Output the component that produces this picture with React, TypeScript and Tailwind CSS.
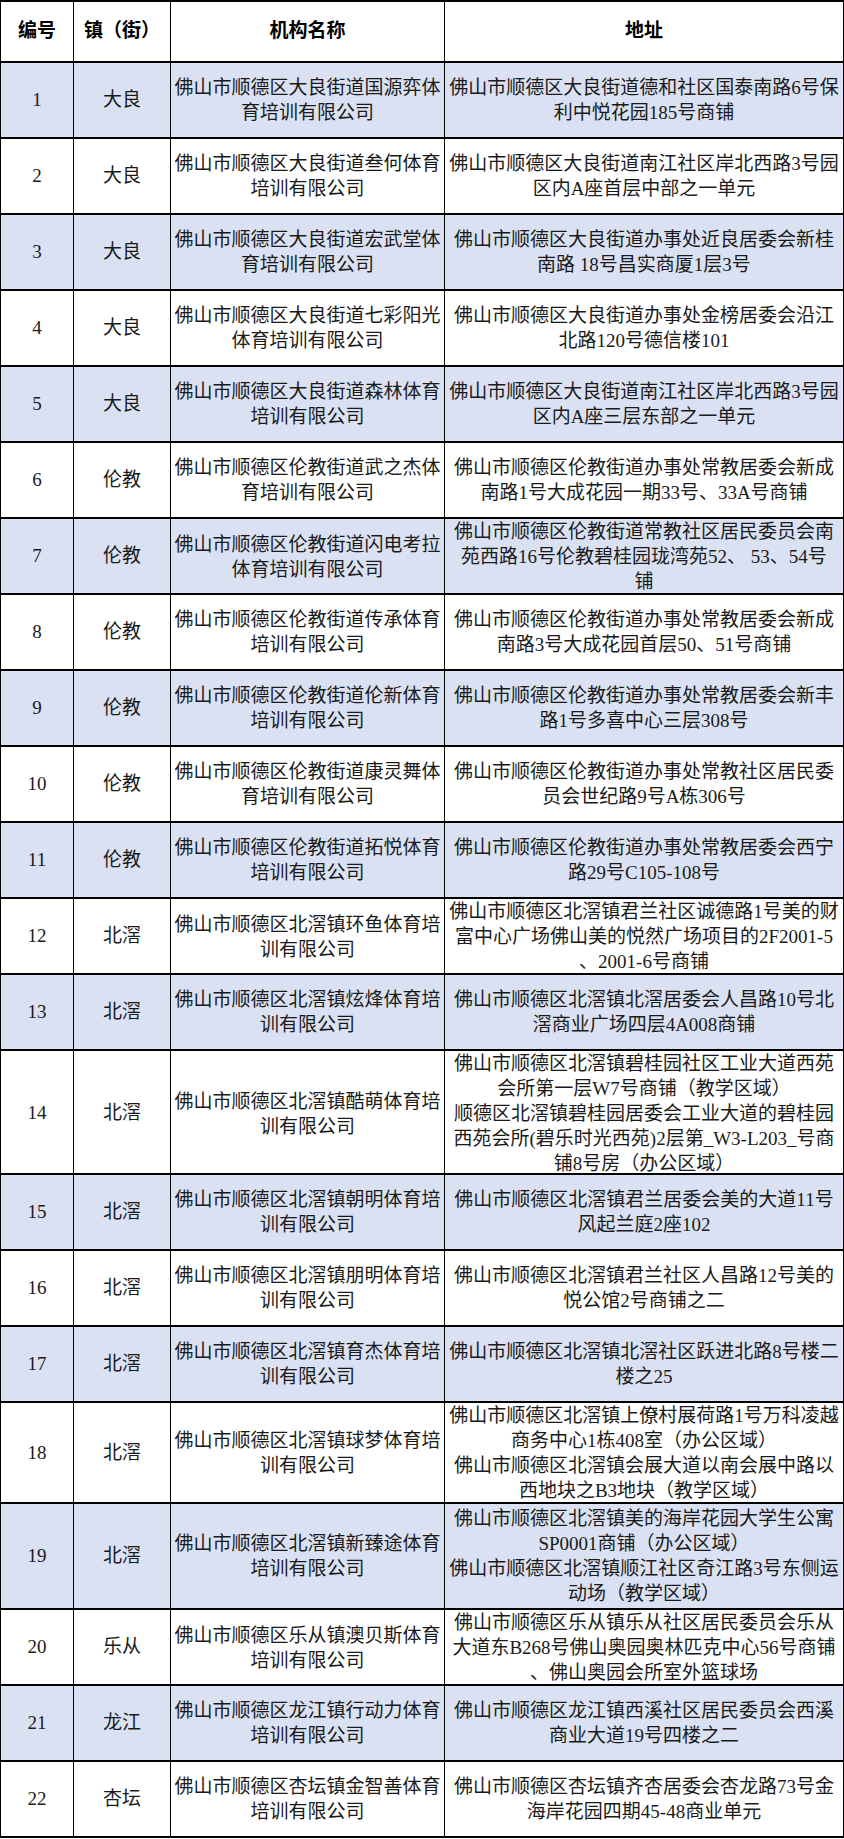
import React from "react";

type Row = { no: string; town: string; name: string[]; addr: string[]; h: string };

const rows: Row[] = [
  { no: "1", town: "大良", name: ["佛山市顺德区大良街道国源弈体", "育培训有限公司"], addr: ["佛山市顺德区大良街道德和社区国泰南路6号保", "利中悦花园185号商铺"], h: "h-[76px]" },
  { no: "2", town: "大良", name: ["佛山市顺德区大良街道叁何体育", "培训有限公司"], addr: ["佛山市顺德区大良街道南江社区岸北西路3号园", "区内A座首层中部之一单元"], h: "h-[76px]" },
  { no: "3", town: "大良", name: ["佛山市顺德区大良街道宏武堂体", "育培训有限公司"], addr: ["佛山市顺德区大良街道办事处近良居委会新桂", "南路 18号昌实商厦1层3号"], h: "h-[76px]" },
  { no: "4", town: "大良", name: ["佛山市顺德区大良街道七彩阳光", "体育培训有限公司"], addr: ["佛山市顺德区大良街道办事处金榜居委会沿江", "北路120号德信楼101"], h: "h-[76px]" },
  { no: "5", town: "大良", name: ["佛山市顺德区大良街道森林体育", "培训有限公司"], addr: ["佛山市顺德区大良街道南江社区岸北西路3号园", "区内A座三层东部之一单元"], h: "h-[76px]" },
  { no: "6", town: "伦教", name: ["佛山市顺德区伦教街道武之杰体", "育培训有限公司"], addr: ["佛山市顺德区伦教街道办事处常教居委会新成", "南路1号大成花园一期33号、33A号商铺"], h: "h-[76px]" },
  { no: "7", town: "伦教", name: ["佛山市顺德区伦教街道闪电考拉", "体育培训有限公司"], addr: ["佛山市顺德区伦教街道常教社区居民委员会南", "苑西路16号伦教碧桂园珑湾苑52、 53、54号", "铺"], h: "h-[76px]" },
  { no: "8", town: "伦教", name: ["佛山市顺德区伦教街道传承体育", "培训有限公司"], addr: ["佛山市顺德区伦教街道办事处常教居委会新成", "南路3号大成花园首层50、51号商铺"], h: "h-[76px]" },
  { no: "9", town: "伦教", name: ["佛山市顺德区伦教街道伦新体育", "培训有限公司"], addr: ["佛山市顺德区伦教街道办事处常教居委会新丰", "路1号多喜中心三层308号"], h: "h-[76px]" },
  { no: "10", town: "伦教", name: ["佛山市顺德区伦教街道康灵舞体", "育培训有限公司"], addr: ["佛山市顺德区伦教街道办事处常教社区居民委", "员会世纪路9号A栋306号"], h: "h-[76px]" },
  { no: "11", town: "伦教", name: ["佛山市顺德区伦教街道拓悦体育", "培训有限公司"], addr: ["佛山市顺德区伦教街道办事处常教居委会西宁", "路29号C105-108号"], h: "h-[76px]" },
  { no: "12", town: "北滘", name: ["佛山市顺德区北滘镇环鱼体育培", "训有限公司"], addr: ["佛山市顺德区北滘镇君兰社区诚德路1号美的财", "富中心广场佛山美的悦然广场项目的2F2001-5", "、2001-6号商铺"], h: "h-[76px]" },
  { no: "13", town: "北滘", name: ["佛山市顺德区北滘镇炫烽体育培", "训有限公司"], addr: ["佛山市顺德区北滘镇北滘居委会人昌路10号北", "滘商业广场四层4A008商铺"], h: "h-[76px]" },
  { no: "14", town: "北滘", name: ["佛山市顺德区北滘镇酷萌体育培", "训有限公司"], addr: ["佛山市顺德区北滘镇碧桂园社区工业大道西苑", "会所第一层W7号商铺（教学区域）", "顺德区北滘镇碧桂园居委会工业大道的碧桂园", "西苑会所(碧乐时光西苑)2层第_W3-L203_号商", "铺8号房（办公区域）"], h: "h-[124px]" },
  { no: "15", town: "北滘", name: ["佛山市顺德区北滘镇朝明体育培", "训有限公司"], addr: ["佛山市顺德区北滘镇君兰居委会美的大道11号", "风起兰庭2座102"], h: "h-[76px]" },
  { no: "16", town: "北滘", name: ["佛山市顺德区北滘镇朋明体育培", "训有限公司"], addr: ["佛山市顺德区北滘镇君兰社区人昌路12号美的", "悦公馆2号商铺之二"], h: "h-[76px]" },
  { no: "17", town: "北滘", name: ["佛山市顺德区北滘镇育杰体育培", "训有限公司"], addr: ["佛山市顺德区北滘镇北滘社区跃进北路8号楼二", "楼之25"], h: "h-[76px]" },
  { no: "18", town: "北滘", name: ["佛山市顺德区北滘镇球梦体育培", "训有限公司"], addr: ["佛山市顺德区北滘镇上僚村展荷路1号万科凌越", "商务中心1栋408室（办公区域）", "佛山市顺德区北滘镇会展大道以南会展中路以", "西地块之B3地块（教学区域）"], h: "h-[101px]" },
  { no: "19", town: "北滘", name: ["佛山市顺德区北滘镇新臻途体育", "培训有限公司"], addr: ["佛山市顺德区北滘镇美的海岸花园大学生公寓", "SP0001商铺（办公区域）", "佛山市顺德区北滘镇顺江社区奇江路3号东侧运", "动场（教学区域）"], h: "h-[106px]" },
  { no: "20", town: "乐从", name: ["佛山市顺德区乐从镇澳贝斯体育", "培训有限公司"], addr: ["佛山市顺德区乐从镇乐从社区居民委员会乐从", "大道东B268号佛山奥园奥林匹克中心56号商铺", "、佛山奥园会所室外篮球场"], h: "h-[76px]" },
  { no: "21", town: "龙江", name: ["佛山市顺德区龙江镇行动力体育", "培训有限公司"], addr: ["佛山市顺德区龙江镇西溪社区居民委员会西溪", "商业大道19号四楼之二"], h: "h-[76px]" },
  { no: "22", town: "杏坛", name: ["佛山市顺德区杏坛镇金智善体育", "培训有限公司"], addr: ["佛山市顺德区杏坛镇齐杏居委会杏龙路73号金", "海岸花园四期45-48商业单元"], h: "h-[76px]" },
];

const font = { fontFamily: '"Liberation Serif", "Noto Sans CJK SC", serif' };

function Lines({ lines }: { lines: string[] }) {
  return (
    <div className="flex flex-col items-center">
      {lines.map((l, i) => (
        <div key={i} className="whitespace-pre leading-[25px]">
          {l}
        </div>
      ))}
    </div>
  );
}

export default function App() {
  return (
    <div className="w-[844px] bg-white text-[19px] text-[#1a1a1a]" style={font}>
      <div className="border-t-2 border-l border-black">
        <div className="grid h-[61px] grid-cols-[73px_97px_274px_399px] border-b-2 border-black bg-white font-bold text-black">
          <div className="flex items-center justify-center border-r border-black">编号</div>
          <div className="flex items-center justify-center border-r border-black">镇（街）</div>
          <div className="flex items-center justify-center border-r border-black">机构名称</div>
          <div className="flex items-center justify-center border-r border-black">地址</div>
        </div>
        {rows.map((r, i) => (
          <div
            key={r.no}
            className={`grid ${r.h} grid-cols-[73px_97px_274px_399px] border-b-2 border-black ${i % 2 === 0 ? "bg-[#d9e1f2]" : "bg-white"}`}
          >
            <div className="flex items-center justify-center border-r border-black">{r.no}</div>
            <div className="flex items-center justify-center border-r border-black">{r.town}</div>
            <div className="flex items-center justify-center overflow-visible border-r border-black">
              <Lines lines={r.name} />
            </div>
            <div className="flex items-center justify-center overflow-visible border-r border-black">
              <Lines lines={r.addr} />
            </div>
          </div>
        ))}
      </div>
    </div>
  );
}
